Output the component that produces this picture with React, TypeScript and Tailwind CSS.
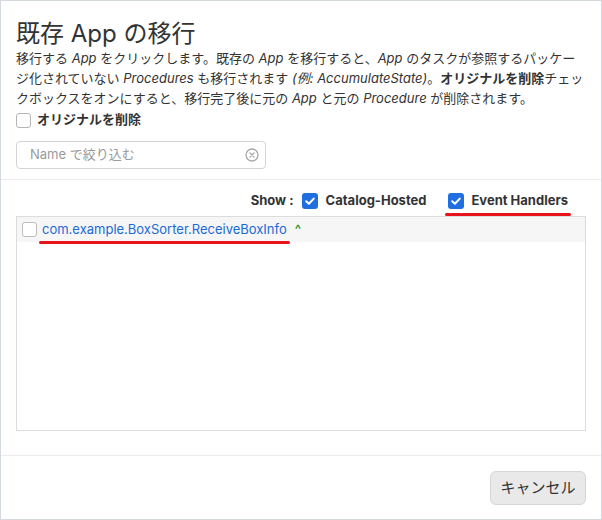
import React from 'react';

const FONT = { fontFamily: 'Inter, "Noto Sans CJK JP", sans-serif' };

const CheckIcon = () => (
  <svg viewBox="0 0 16 16" className="w-[16px] h-[16px]">
    <rect x="0" y="0" width="16" height="16" rx="3" fill="#1f6fe0" />
    <path d="M4.2 8.3 L6.9 10.8 L11.8 5.6" fill="none" stroke="#fff" strokeWidth="2" strokeLinecap="round" strokeLinejoin="round" />
  </svg>
);

const ClearIcon = () => (
  <svg viewBox="0 0 14 14" className="w-[14px] h-[14px]">
    <circle cx="7" cy="7" r="6" fill="none" stroke="#a8a8a8" strokeWidth="1.3" />
    <path d="M5 5 L9 9 M9 5 L5 9" stroke="#a8a8a8" strokeWidth="1.3" strokeLinecap="round" />
  </svg>
);

const Marked: React.FC<{ children: React.ReactNode; className?: string }> = ({ children, className }) => (
  <span className={`relative inline-flex items-center ${className ?? ''}`}>
    {children}
    <span className="absolute left-[-3px] right-[-3px] bottom-[-5px] h-[3px] rounded-full bg-[#e8121b]" />
  </span>
);

export default function App() {
  return (
    <div className="w-[602px] h-[520px] bg-white border border-[#d3d9df] flex flex-col text-[#333]" style={FONT}>
      <div className="px-[15px] pt-[18px] pb-[10px] border-b border-[#ececec]">
        <h1 className="text-[24px] leading-[30px] font-normal text-[#333]">既存 App の移行</h1>
        <p className="text-[13px] leading-[20px] mt-[-1px] w-[570px]">
          移行する <i>App</i> をクリックします。既存の <i>App</i> を移行すると、<i>App</i> のタスクが参照するパッケー
          <br />
          ジ化されていない <i>Procedures</i> も移行されます <i>(例: AccumulateState)</i>。<b>オリジナルを削除</b>チェッ
          <br />
          クボックスをオンにすると、移行完了後に元の <i>App</i> と元の <i>Procedure</i> が削除されます。
        </p>
        <label className="flex items-center gap-[6px] mt-[2px] h-[20px] text-[13px] font-bold">
          <span className="w-[15px] h-[15px] rounded-[3px] border border-[#b5b5b5] bg-white" />
          オリジナルを削除
        </label>
        <div className="mt-[11px] w-[250px] h-[28px] border border-[#d4d4d4] rounded-[4px] flex items-center pl-[13px] pr-[6px]">
          <span className="flex-1 text-[13px] text-[#9a9a9a]">Name で絞り込む</span>
          <ClearIcon />
        </div>
      </div>

      <div className="px-[15px] pt-[11px]">
        <div className="flex items-center justify-end h-[20px] pr-[18px] text-[13px] font-bold text-[#333]">
          <span>Show :</span>
          <span className="ml-[8px]"><CheckIcon /></span>
          <span className="ml-[8px]">Catalog-Hosted</span>
          <Marked className="ml-[22px] gap-[7px]">
            <CheckIcon />
            <span>Event Handlers</span>
          </Marked>
        </div>
        <div className="mt-[5px] h-[215px] border border-[#dcdcdc]">
          <div className="h-[25px] bg-[#f6f6f6] flex items-center pl-[5px] text-[13px]">
            <span className="w-[15px] h-[15px] rounded-[3px] border border-[#bcbcbc] bg-white" />
            <Marked className="ml-[5px]">
              <span className="text-[#1a6ad8]">com.example.BoxSorter.ReceiveBoxInfo</span>
            </Marked>
            <span className="ml-[8px] text-[#2e9a3c] text-[13px] font-bold">^</span>
          </div>
        </div>
      </div>

      <div className="mt-[24px] border-t border-[#ececec] flex-1 flex justify-end items-start pt-[15px] pr-[15px]">
        <button className="w-[96px] h-[34px] rounded-[6px] bg-[#e9e9e9] border border-[#d6d6d6] text-[15px] text-[#333]">
          キャンセル
        </button>
      </div>
    </div>
  );
}
